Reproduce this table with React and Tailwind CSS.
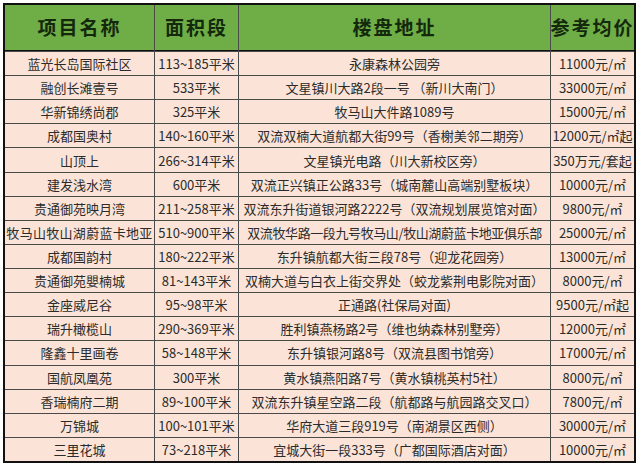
import React from "react";

const rows = [
  ["蓝光长岛国际社区", "113~185平米", "永康森林公园旁", "11000元/㎡"],
  ["融创长滩壹号", "533平米", "文星镇川大路2段一号 （新川大南门）", "33000元/㎡"],
  ["华新锦绣尚郡", "325平米", "牧马山大件路1089号", "15000元/㎡"],
  ["成都国奥村", "140~160平米", "双流双楠大道航都大街99号（香榭美邻二期旁）", "12000元/㎡起"],
  ["山顶上", "266~314平米", "文星镇光电路（川大新校区旁）", "350万元/套起"],
  ["建发浅水湾", "600平米", "双流正兴镇正公路33号（城南麓山高端别墅板块）", "10000元/㎡"],
  ["贵通御苑映月湾", "211~258平米", "双流东升街道银河路2222号（双流规划展览馆对面）", "9800元/㎡"],
  ["牧马山牧山湖蔚蓝卡地亚", "510~900平米", "双流牧华路一段九号牧马山/牧山湖蔚蓝卡地亚俱乐部", "25000元/㎡"],
  ["成都国韵村", "180~222平米", "东升镇航都大街三段78号（迎龙花园旁）", "13000元/㎡"],
  ["贵通御苑嬰楠城", "81~143平米", "双楠大道与白衣上街交界处（蛟龙紫荆电影院对面）", "8000元/㎡"],
  ["金座威尼谷", "95~98平米", "正通路(社保局对面)", "9500元/㎡起"],
  ["瑞升橄榄山", "290~369平米", "胜利镇燕杨路2号（维也纳森林别墅旁）", "12000元/㎡"],
  ["隆鑫十里画卷", "58~148平米", "东升镇银河路8号（双流县图书馆旁）", "17000元/㎡"],
  ["国航凤凰苑", "300平米", "黄水镇燕阳路7号（黄水镇桃英村5社）", "8000元/㎡"],
  ["香瑞楠府二期", "89~100平米", "双流东升镇星空路二段（航都路与航园路交叉口）", "7800元/㎡"],
  ["万锦城", "100~101平米", "华府大道三段919号（南湖景区西侧）", "30000元/㎡"],
  ["三里花城", "73~218平米", "宜城大街一段333号（广都国际酒店对面）", "10000元/㎡"],
];

const headers = ["项目名称", "面积段", "楼盘地址", "参考均价"];

export default function App() {
  return (
    <div
      className="w-[640px] h-[466px] bg-white pt-[3px] pl-[3px]"
      style={{ fontFamily: '"Noto Sans CJK SC", "Noto Sans", sans-serif' }}
    >
      <div className="w-[633px] h-[460px] border-2 border-[#111] bg-[#4a4a4a] grid grid-cols-[149px_83px_311px_1fr] grid-rows-[46px_repeat(17,minmax(0,1fr))] gap-px">
        {headers.map((h) => (
          <div
            key={h}
            className="bg-[#6fad47] border-b border-[#111] flex items-center justify-center text-[19px] font-bold text-[#14280c] tracking-[2px] whitespace-nowrap overflow-hidden"
          >
            {h}
          </div>
        ))}
        {rows.map((r, i) =>
          r.map((c, j) => (
            <div
              key={i + "-" + j}
              className={
                "bg-[#fbe4d7] flex items-center justify-center text-[13px] leading-none text-[#2b2b2b] whitespace-nowrap overflow-hidden " +
                (j === 2 && i === 7 ? "tracking-[-0.4px]" : "") +
                (j === 0 && i === 7 ? "tracking-[0.3px]" : "")
              }
            >
              {c}
            </div>
          ))
        )}
      </div>
    </div>
  );
}
